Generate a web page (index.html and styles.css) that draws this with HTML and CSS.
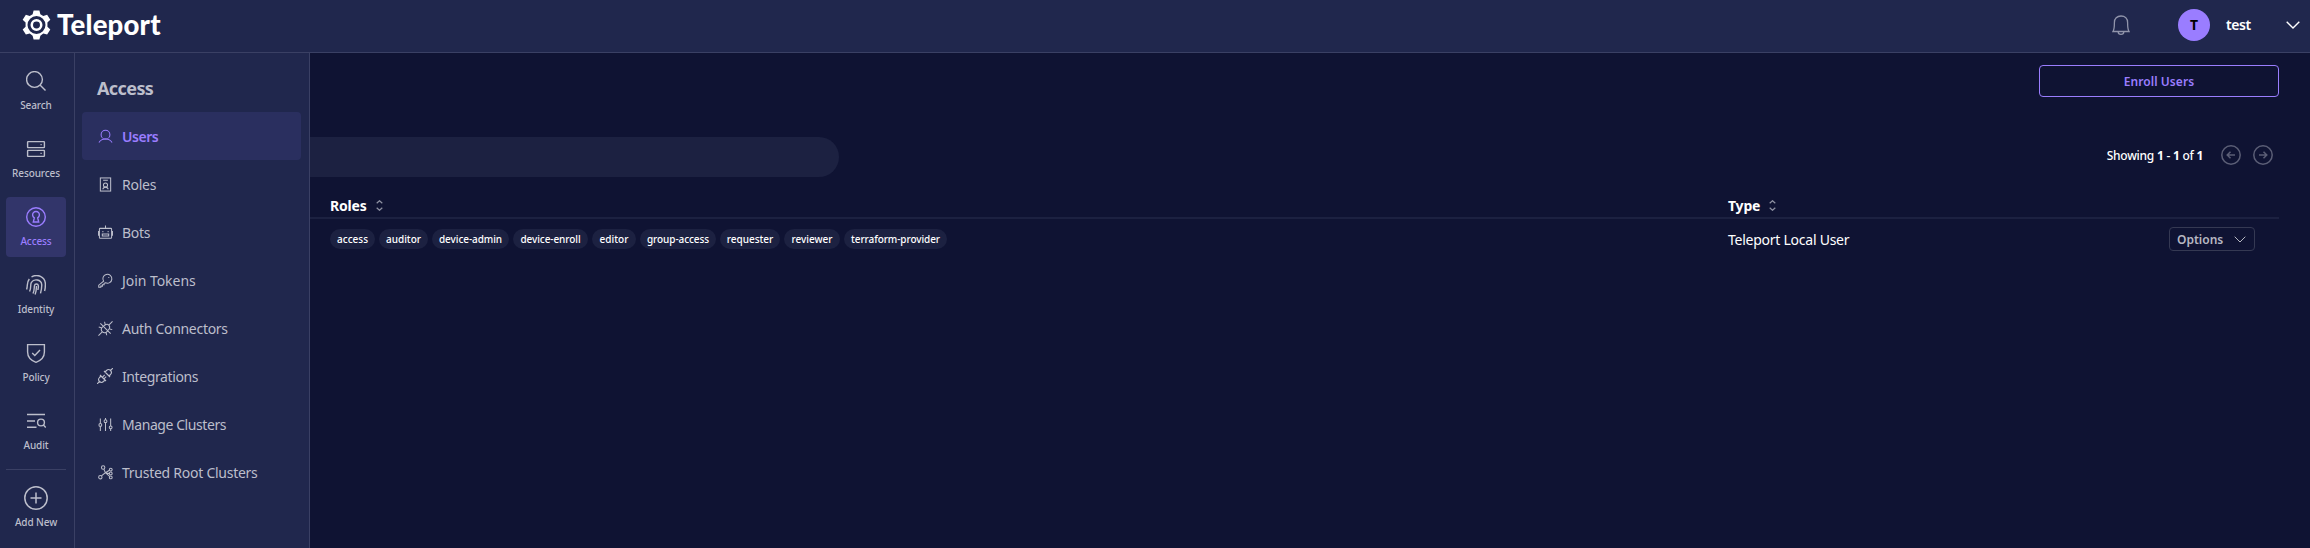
FILE: index.html
```html
<!DOCTYPE html>
<html lang="en">
<head>
<meta charset="utf-8">
<title>Teleport</title>
<link rel="stylesheet" href="styles.css">
</head>
<body>
<header class="topbar">
  <div class="logo">
    <svg class="gear" viewBox="0 0 30 30"><path fill-rule="evenodd" fill="currentColor" d="M12 0h6l1 4 3 1.700 4-1.200 3.300 5-3 2.900v4.500l3 2.800-3.300 5.200-4-1.200L19 26l-1 4h-6l-1-4-3-2.300-4 1.200-3.300-5.200 3-2.800v-4.500l-3-2.900L4 4.500l4 1.200L11 4zM15 5.700a9.300 9.300 0 1 0 0 18.600a9.300 9.300 0 1 0 0-18.600z"/><circle cx="15" cy="15" r="4.900" fill="none" stroke="currentColor" stroke-width="2.600"/></svg>
    <span class="brand">Teleport</span>
  </div>
  <div class="account">
    <svg class="bell" viewBox="0 0 18 20"><path d="M1 16.500c1-1.500 1.400-3 1.400-9C2.400 3.700 5 1 9 1s6.600 2.700 6.600 6.500c0 6 .4 7.500 1.400 9zM6.200 17a2.800 2.300 0 0 0 5.600 0"/></svg>
    <span class="avatar">T</span>
    <span class="username">test</span>
    <svg class="chev" viewBox="0 0 14 8"><path d="M.7.7 7 7 13.300.7"/></svg>
  </div>
</header>
<div class="body">
  <nav class="rail">
    <a class="rail-item"><svg viewBox="0 0 20 20"><circle cx="8.500" cy="8.500" r="7.900"/><path d="m14 14 5.500 5.500"/></svg><span>Search</span></a>
    <a class="rail-item"><svg viewBox="0 0 20 20"><rect x="1.600" y="2.600" width="16.800" height="6" rx=".6"/><rect x="1.600" y="11.400" width="16.800" height="6" rx=".6"/><path d="M14.500 5.600h1.200M14.500 14.400h1.200"/></svg><span>Resources</span></a>
    <a class="rail-item active"><svg viewBox="0 0 20 20"><circle cx="10" cy="10" r="9.300"/><path d="M8.300 10.800a3.400 3.400 0 1 1 3.400 0l1 4.200H7.300z"/></svg><span>Access</span></a>
    <a class="rail-item"><svg viewBox="0 0 20 20"><path d="M.6 14.500C2 10 .5 7.500 3.300 4M5.500 2C11-1.500 19.200 1.500 19.400 9c0 2.500-.2 5-.8 7M3.600 16.500C5.500 12.500 4 9.700 5.400 7.400c2.600-4 9.700-3 10.300 2 .2 3-.4 6-1.200 9M7 18.500c1.500-3 1.200-5.500 1.400-7.700.4-2.500 3.700-2.500 4 0 .1 2-.3 3-.5 4.200M10.400 11c.1 3.500-.4 6-1.300 8.500"/></svg><span>Identity</span></a>
    <a class="rail-item"><svg viewBox="0 0 20 20"><path d="M1.600 1.600h16.800V9c0 5-3 8.300-8.400 10.300C4.600 17.300 1.600 14 1.600 9zM6.200 10l2.600 2.600L14 7"/></svg><span>Policy</span></a>
    <a class="rail-item"><svg viewBox="0 0 20 20"><path d="M1 3.500h18M1 10h8M1 16.300h9.500"/><circle cx="15" cy="11.500" r="3.400"/><path d="m17.400 14 2.400 2.500"/></svg><span>Audit</span></a>
    <a class="rail-item add"><svg viewBox="0 0 24 24"><circle cx="12" cy="12" r="11.200"/><path d="M12 6.500v11M6.500 12h11"/></svg><span>Add New</span></a>
  </nav>
  <aside class="panel">
    <h2 class="panel-title">Access</h2>
    <a class="panel-item current"><svg viewBox="0 0 16 16"><circle cx="8" cy="6" r="4.700"/><path d="M1 14.500c1.500-2.600 4-3.800 7-3.800s5.500 1.200 7 3.800"/></svg><span class="l-users">Users</span></a>
    <a class="panel-item"><svg viewBox="0 0 16 16"><rect x="2.500" y="1" width="11" height="14"/><path d="M5.500 3.500h5M5 13c.8-1.700 1.700-2.200 3-2.200s2.200.5 3 2.200"/><circle cx="8" cy="8.500" r="2.200"/></svg><span class="l-roles">Roles</span></a>
    <a class="panel-item"><svg viewBox="0 0 16 16"><rect x="1.500" y="3.600" width="13" height="10.600" rx=".8"/><path d="M8 .5v3M.5 6.500v5M15.500 6.500v5M5.200 6.300v1.500M10.800 6.300v1.500M4 9.500h8M4.600 9.500v2.300h6.800V9.500"/></svg><span class="l-bots">Bots</span></a>
    <a class="panel-item"><svg viewBox="0 0 16 16"><path d="M6 8.800A4.800 4.800 0 1 1 8 10.500L6.500 11v1.500H4.700V14H3v1.200H.8V13z"/><path d="M11 4.700h1"/></svg><span class="l-join">Join Tokens</span></a>
    <a class="panel-item"><svg viewBox="0 0 16 16"><path d="M.5 15.500 4.500 11.500M11.500 4.500l4-4M5 5l6 6M4.500 11.500C3 9.500 3.300 7.500 5 6.200l2.500-2c1.800-1 3.300-.6 4 .3 1 1 1.300 2.500.3 4l-2 2.500c-1.300 1.700-3.300 2-5.300.5zM.8 6.500l2.700.8M2.500 2.500 5 5M7 .8l.6 2.700M12.500 8.500l2.700.7M11 11l2.500 2.500M8.700 12.500l.6 2.700"/></svg><span class="l-auth">Auth Connectors</span></a>
    <a class="panel-item"><svg class="wide" viewBox="0 0 16 16"><path d="m0 16 2.500-2.500M13.500 2.500 16 0M3 7l6 6M4 8l-1.500 1.500c-1.300 1.400-1.200 2.800 0 4s2.600 1.300 4 0L8 12M7 3l6 6M8 4l1.500-1.500c1.400-1.300 2.800-1.200 4 0s1.300 2.600 0 4L12 8M5.300 9.300l2.400-2.400M6.900 10.900l2.300-2.300"/></svg><span class="l-int">Integrations</span></a>
    <a class="panel-item"><svg viewBox="0 0 16 16"><path d="M2.500 1.500V7M2.500 10v5M8 1v2M8 6v9M13.500 1.500v8M13.500 12.500V15"/><circle cx="2.500" cy="8.500" r="1.500"/><circle cx="8" cy="4.500" r="1.500"/><circle cx="13.500" cy="11" r="1.500"/></svg><span class="l-man">Manage Clusters</span></a>
    <a class="panel-item"><svg viewBox="0 0 16 16"><circle cx="5.500" cy="2.700" r="1.800"/><circle cx="2.500" cy="13" r="1.800"/><circle cx="13.600" cy="4.900" r="1.500"/><circle cx="13.600" cy="9" r="1.500"/><circle cx="13.600" cy="13.200" r="1.500"/><path d="m6.200 4.400 1.700 3.800-4.200 3.500M7.900 8.200l4.300-2.600M7.900 8.200 12 9M7.900 8.200l4.500 4"/></svg><span class="l-trust">Trusted Root Clusters</span></a>
  </aside>
  <main class="content">
    <div class="actions"><button class="enroll">Enroll Users</button></div>
    <div class="toolbar">
      <div class="search"></div>
      <div class="pager">
        <span class="showing">Showing <b>1</b> - <b>1</b> of <b>1</b></span>
        <svg viewBox="0 0 20 20"><circle cx="10" cy="10" r="9.200"/><path d="M14 10H6.300M9.500 6.700 6.200 10l3.300 3.300"/></svg>
        <svg viewBox="0 0 20 20"><circle cx="10" cy="10" r="9.200"/><path d="M6 10h7.700M10.500 6.700l3.300 3.300-3.300 3.300"/></svg>
      </div>
    </div>
    <div class="row head">
      <div class="cell"><span class="h-roles">Roles</span><svg class="sort" viewBox="0 0 7 11"><path d="M.7 3.200 3.500.7l2.800 2.500M.7 7.800l2.800 2.500 2.800-2.500"/></svg></div>
      <div class="cell"><span class="h-type">Type</span><svg class="sort" viewBox="0 0 7 11"><path d="M.7 3.200 3.500.7l2.800 2.500M.7 7.800l2.800 2.500 2.800-2.500"/></svg></div>
    </div>
    <div class="row data">
      <div class="tags">
        <span class="tag t1">access</span><span class="tag t2">auditor</span><span class="tag t3">device-admin</span><span class="tag t4">device-enroll</span><span class="tag t5">editor</span><span class="tag t6">group-access</span><span class="tag t7">requester</span><span class="tag t8">reviewer</span><span class="tag t9">terraform-provider</span>
      </div>
      <div class="cell usertype"><span>Teleport Local User</span></div>
      <button class="options"><span>Options</span><svg viewBox="0 0 12 7"><path d="M.7.7 6 6 11.300.7"/></svg></button>
    </div>
  </main>
</div>
</body>
</html>
```
FILE: styles.css
```css
* { box-sizing: border-box; }
body { margin: 0; width: 2310px; height: 548px; overflow: hidden; background: #0f1333; color: #fff; font-family: "Noto Sans", sans-serif; display: flex; flex-direction: column; }
svg { fill: none; stroke: currentColor; flex: none; }
span { white-space: nowrap; }
button { font-family: inherit; background: none; padding: 0; }
.topbar { height: 53px; flex: none; background: #20274d; border-bottom: 1px solid #3a4064; display: flex; justify-content: space-between; padding: 0 10px 3px 22px; }
.logo { display: flex; align-items: center; gap: 6px; }
.gear { width: 29px; height: 30px; stroke: none; }
.brand { font-family: Lato, sans-serif; font-size: 27.500px; font-weight: 900; letter-spacing: .2px; line-height: 30px; }
.account { display: flex; align-items: center; }
.bell { width: 18px; height: 20px; color: #9195ab; stroke-width: 1.300; margin-right: 48px; }
.avatar { width: 32px; height: 32px; border-radius: 50%; background: #9a7dff; color: #000; font-size: 14px; font-weight: 700; display: flex; align-items: center; justify-content: center; margin-right: 16px; }
.username { width: 60px; font-size: 14px; font-weight: 600; letter-spacing: -0.400px; }
.chev { width: 14px; height: 8px; stroke-width: 1.400; }
.body { flex: 1; display: flex; min-height: 0; }
.rail { width: 75px; flex: none; background: #20274d; border-right: 1px solid #3a4064; padding: 8px 8px 0 6px; display: flex; flex-direction: column; gap: 8px; color: #bcbecb; }
.rail-item { height: 60px; display: flex; flex-direction: column; align-items: center; padding-top: 10px; gap: 7px; border-radius: 4px; font-size: 10px; font-weight: 500; line-height: 14px; letter-spacing: -0.100px; }
.rail-item svg { width: 20px; height: 20px; stroke-width: 1.400; }
.rail-item.active { background: #32356a; color: #9a7dff; }
.rail-item.add { border-top: 1px solid #3a4064; border-radius: 0; height: 76px; padding-top: 16px; gap: 5px; }
.rail-item.add svg { width: 24px; height: 24px; stroke-width: 1.500; }
.panel { width: 235px; flex: none; background: #20274d; border-right: 1px solid #3a4064; padding: 0 8px 0 7px; color: #bcbecb; }
.panel-title { margin: 0; height: 59px; padding: 22px 0 0 15px; font-size: 18px; line-height: 26px; font-weight: 700; letter-spacing: -0.600px; }
.panel-item { height: 48px; display: flex; align-items: center; gap: 9px; padding-left: 16px; border-radius: 4px; font-size: 14px; }
.panel-item svg { width: 15px; height: 15px; stroke-width: 1.100; }
.panel-item svg.wide { width: 16px; height: 16px; margin: 0 0 0 -1px; }
.panel-item.current { background: #2a2f5f; color: #9a7dff; font-weight: 600; }
.l-users { letter-spacing: -0.450px; }
.l-roles, .l-bots { letter-spacing: -0.250px; }
.l-join { letter-spacing: -0.050px; }
.l-auth { letter-spacing: -0.300px; }
.l-int { letter-spacing: -0.400px; }
.l-man { letter-spacing: -0.430px; }
.l-trust { letter-spacing: -0.260px; }
.content { flex: 1; padding: 12px 31px 0 0; }
.actions { display: flex; justify-content: flex-end; }
.enroll { width: 240px; height: 32px; border: 1px solid #9a7dff; border-radius: 4px; color: #9a7dff; font-size: 12px; font-weight: 600; letter-spacing: .05px; }
.toolbar { display: flex; justify-content: space-between; align-items: center; height: 40px; margin-top: 40px; }
.search { width: 529px; height: 40px; background: #1c2141; border-radius: 0 20px 20px 0; }
.pager { display: flex; align-items: center; padding: 0 6px 4px 0; gap: 12px; }
.pager svg { width: 20px; height: 20px; color: #5b5e76; stroke-width: 1.500; }
.showing { font-size: 12px; font-weight: 500; margin-right: 6px; letter-spacing: -0.250px; }
.row { display: grid; grid-template-columns: 1398px 441px 1fr; padding-left: 20px; align-items: center; }
.head { height: 42px; padding-top: 17px; border-bottom: 2px solid #1c2141; font-size: 14px; font-weight: 700; letter-spacing: -0.200px; }
.cell { display: flex; align-items: center; gap: 9px; }
.sort { width: 7px; height: 11px; color: #8e91a2; stroke-width: 1.200; }
.data { height: 40px; }
.tags { display: flex; gap: 4px; }
.tag { height: 20px; border-radius: 10px; background: #1c2141; display: flex; align-items: center; justify-content: center; font-size: 10px; font-weight: 500; }
.t1 { width: 45px; } .t2 { width: 49px; } .t3 { width: 77px; } .t4 { width: 75px; } .t5 { width: 44px; } .t6 { width: 76px; } .t7 { width: 60px; } .t8 { width: 56px; } .t9 { width: 103px; }
.t3, .t4, .t6, .t9 { letter-spacing: -0.080px; }
.usertype { font-size: 14px; letter-spacing: -0.250px; }
.options { width: 86px; height: 24px; border: 1px solid #353953; border-radius: 4px; color: #b7b8c2; font-size: 12px; font-weight: 600; display: flex; align-items: center; justify-content: space-between; padding: 0 8px 0 7px; }
.options svg { width: 12px; height: 7px; }
```
